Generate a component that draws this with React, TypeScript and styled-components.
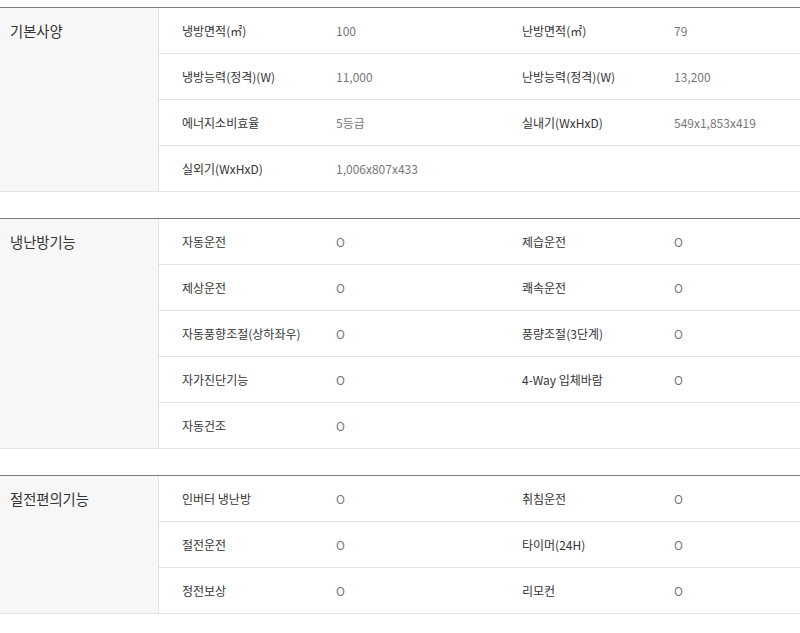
import React from "react";
import styled, { createGlobalStyle } from "styled-components";

const Global = createGlobalStyle`
  html, body { margin: 0; padding: 0; background: #fff; }
  body { font-family: "Noto Sans CJK KR", "Noto Sans", sans-serif; }
`;

const Page = styled.div`
  padding-top: 7px;
  display: flex;
  flex-direction: column;
  gap: 26px;
`;

const Section = styled.section`
  display: grid;
  grid-template-columns: 159px 1fr;
  border-top: 1px solid #7a7a7a;
  border-bottom: 1px solid #e3e3e3;
`;

const Heading = styled.div`
  background: #f7f7f7;
  border-right: 1px solid #e3e3e3;
  padding: 13px 10px 0 10px;
  font-size: 14.3px;
  line-height: 20px;
  color: #333;
`;

const Rows = styled.div`
  display: flex;
  flex-direction: column;
`;

const Row = styled.div`
  display: grid;
  grid-template-columns: 154px 186px 152px 1fr;
  height: 45px;
  align-items: center;
  & + & { border-top: 1px solid #e3e3e3; }
`;

const Label = styled.div`
  padding-left: 23px;
  font-size: 12px;
  color: #333;
  white-space: nowrap;
`;

const Value = styled.div`
  padding-left: 23px;
  font-size: 12px;
  color: #777;
  white-space: nowrap;
`;

type Item = [string, string];
type SectionData = { title: string; rows: Item[][] };

const data: SectionData[] = [
  {
    title: "기본사양",
    rows: [
      [["냉방면적(㎡)", "100"], ["난방면적(㎡)", "79"]],
      [["냉방능력(정격)(W)", "11,000"], ["난방능력(정격)(W)", "13,200"]],
      [["에너지소비효율", "5등급"], ["실내기(WxHxD)", "549x1,853x419"]],
      [["실외기(WxHxD)", "1,006x807x433"]],
    ],
  },
  {
    title: "냉난방기능",
    rows: [
      [["자동운전", "O"], ["제습운전", "O"]],
      [["제상운전", "O"], ["쾌속운전", "O"]],
      [["자동풍향조절(상하좌우)", "O"], ["풍량조절(3단계)", "O"]],
      [["자가진단기능", "O"], ["4-Way 입체바람", "O"]],
      [["자동건조", "O"]],
    ],
  },
  {
    title: "절전편의기능",
    rows: [
      [["인버터 냉난방", "O"], ["취침운전", "O"]],
      [["절전운전", "O"], ["타이머(24H)", "O"]],
      [["정전보상", "O"], ["리모컨", "O"]],
    ],
  },
];

export default function App() {
  return (
    <Page>
      <Global />
      {data.map((s) => (
        <Section key={s.title}>
          <Heading>{s.title}</Heading>
          <Rows>
            {s.rows.map((r, i) => (
              <Row key={i}>
                {r.map(([l, v]) => (
                  <React.Fragment key={l}>
                    <Label>{l}</Label>
                    <Value>{v}</Value>
                  </React.Fragment>
                ))}
              </Row>
            ))}
          </Rows>
        </Section>
      ))}
    </Page>
  );
}
